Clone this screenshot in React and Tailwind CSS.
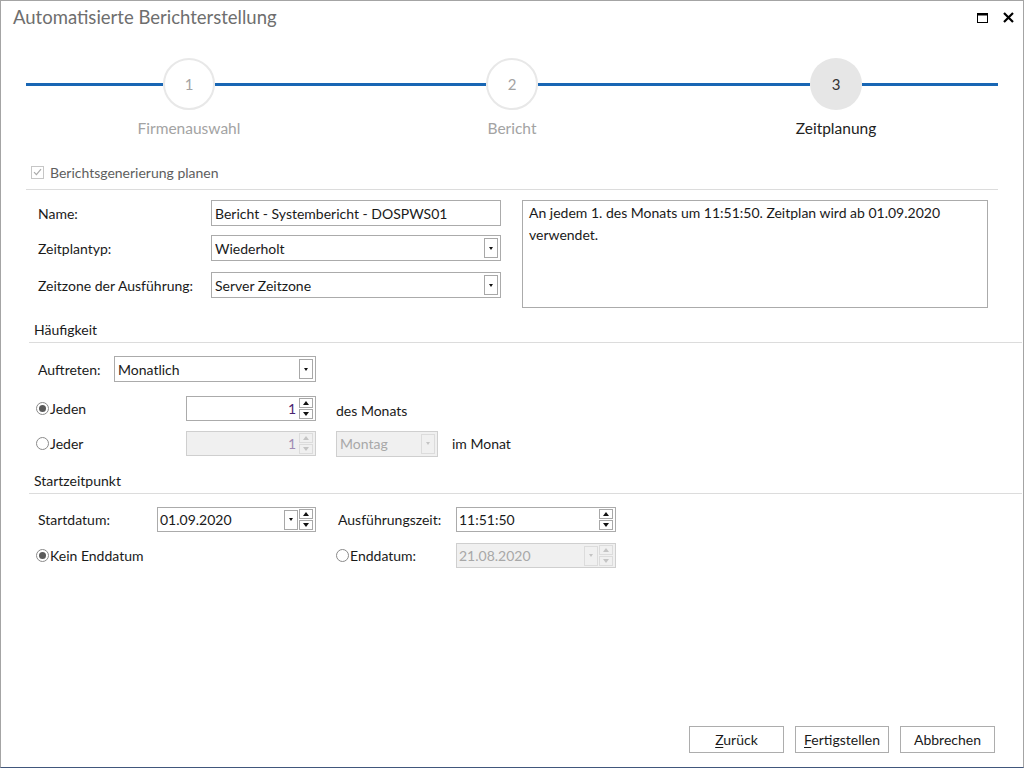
import React from 'react';

const font = "font-['Lato','Noto_Sans',sans-serif]";

function Up({ dim }) {
    return (
        <span
            className={
                'w-0 h-0 border-l-[3px] border-r-[3px] border-b-[4px] border-l-transparent border-r-transparent ' +
                (dim ? 'border-b-[#c4c4c4]' : 'border-b-[#111]')
            }
        />
    );
}

function Down({ dim }) {
    return (
        <span
            className={
                'w-0 h-0 border-l-[3px] border-r-[3px] border-t-[4px] border-l-transparent border-r-transparent ' +
                (dim ? 'border-t-[#c4c4c4]' : 'border-t-[#111]')
            }
        />
    );
}

function DropBtn({ dim }) {
    return (
        <div
            className={
                'w-[14px] h-[20px] border flex items-center justify-center shrink-0 ' +
                (dim ? 'border-[#dcdcdc] bg-[#f0f0f0]' : 'border-[#a8a8a8] bg-white')
            }
        >
            <span
                className={
                    'w-0 h-0 border-l-[2px] border-r-[2px] border-t-[3px] border-l-transparent border-r-transparent ' +
                    (dim ? 'border-t-[#c4c4c4]' : 'border-t-[#111]')
                }
            />
        </div>
    );
}

function Spin({ dim }) {
    const box = 'h-[10px] w-[14px] border flex items-center justify-center ' +
        (dim ? 'border-[#dcdcdc]' : 'border-[#a8a8a8] bg-white');
    return (
        <div className="flex flex-col gap-px shrink-0">
            <div className={box}><Up dim={dim} /></div>
            <div className={box}><Down dim={dim} /></div>
        </div>
    );
}

function Select({ w, value, dim }) {
    return (
        <div
            className={
                'h-[26px] border flex items-center pl-[3px] pr-[2px] ' + w + ' ' +
                (dim ? 'border-[#cfcfcf] bg-[#f0f0f0] text-[#a8a8a8]' : 'border-[#ababab] bg-white text-[#1a1a1a]')
            }
        >
            <span className="flex-1 truncate">{value}</span>
            <DropBtn dim={dim} />
        </div>
    );
}

function NumSpin({ dim }) {
    return (
        <div
            className={
                'w-[130px] h-[25px] border flex items-center justify-end gap-[3px] pr-[2px] ' +
                (dim ? 'border-[#cfcfcf] bg-[#f0f0f0] text-[#a08cb4]' : 'border-[#ababab] bg-white text-[#4a2470]')
            }
        >
            <span>1</span>
            <Spin dim={dim} />
        </div>
    );
}

function DateField({ w, value, dim, drop }) {
    return (
        <div
            className={
                'h-[25px] border flex items-center pl-[2px] pr-[2px] gap-px ' + w + ' ' +
                (dim ? 'border-[#cfcfcf] bg-[#f0f0f0] text-[#a8a8a8]' : 'border-[#ababab] bg-white text-[#1a1a1a]')
            }
        >
            <span className="flex-1">{value}</span>
            {drop && <DropBtn dim={dim} />}
            <Spin dim={dim} />
        </div>
    );
}

function Radio({ on, label }) {
    return (
        <div className="flex items-center">
            <span className="w-[13px] h-[13px] rounded-full border border-[#8a8a8a] bg-white flex items-center justify-center">
                {on && <span className="w-[7px] h-[7px] rounded-full bg-[#5a5a5a]" />}
            </span>
            <span className="ml-[1px]">{label}</span>
        </div>
    );
}

function Step({ n, active }) {
    return (
        <div
            className={
                'w-[52px] h-[52px] rounded-full flex items-center justify-center text-[15px] shrink-0 ' +
                (active ? 'bg-[#e6e6e6] text-[#333]' : 'border-2 border-[#e8e8e8] bg-white text-[#a3a3a3]')
            }
        >
            {n}
        </div>
    );
}

function Btn({ children, w }) {
    return (
        <button className={'h-[27px] border border-[#adadad] bg-white text-[#1a1a1a] ' + w}>
            {children}
        </button>
    );
}

export default function App() {
    return (
        <div className={'w-[1024px] h-[768px] bg-white border border-[#a4a4a4] border-b-[#41577c] flex flex-col text-[14px] text-[#1a1a1a] ' + font}>
            {/* Titel */}
            <div className="h-[33px] flex items-center justify-between pl-[12px] pr-[9px]">
                <span className="text-[18.5px] text-[#6e6e6e]">Automatisierte Berichterstellung</span>
                <div className="flex items-center gap-[15px]">
                    <svg width="11" height="10" viewBox="0 0 11 10">
                        <rect x="0.5" y="0.5" width="10" height="9" fill="none" stroke="#000" />
                        <rect x="0" y="0" width="11" height="2.5" fill="#000" />
                    </svg>
                    <svg width="11" height="11" viewBox="0 0 11 11">
                        <path d="M1 1 L10 10 M10 1 L1 10" stroke="#000" strokeWidth="2.2" />
                    </svg>
                </div>
            </div>

            {/* Schritte */}
            <div className="mt-[24px] flex items-center pl-[25px]">
                <div className="w-[137px] h-[3px] bg-[#1866b4]" />
                <Step n="1" />
                <div className="w-[271px] h-[3px] bg-[#1866b4]" />
                <Step n="2" />
                <div className="w-[272px] h-[3px] bg-[#1866b4]" />
                <Step n="3" active />
                <div className="w-[136px] h-[3px] bg-[#1866b4]" />
            </div>
            <div className="mt-[8px] h-[22px] flex items-center pl-[88px] text-[15.5px]">
                <div className="w-[200px] text-center text-[#a3a3a3]">Firmenauswahl</div>
                <div className="ml-[123px] w-[200px] text-center text-[#a3a3a3]">Bericht</div>
                <div className="ml-[124px] w-[200px] text-center text-[#222]">Zeitplanung</div>
            </div>

            {/* Checkbox */}
            <div className="mt-[21px] h-[22px] flex items-center pl-[30px] text-[#5e5e5e]">
                <span className="w-[13px] h-[13px] border border-[#c6c6c6] flex items-center justify-center">
                    <svg width="9" height="8" viewBox="0 0 9 8">
                        <path d="M1 4.2 L3.4 6.6 L8 1.2" fill="none" stroke="#aaa" strokeWidth="1.2" />
                    </svg>
                </span>
                <span className="ml-[6px]">Berichtsgenerierung planen</span>
            </div>
            <div className="mt-[6px] ml-[25px] w-[972px] h-px bg-[#dcdcdc]" />

            {/* Name / Typ / Zone */}
            <div className="mt-[10px] flex pl-[37px]">
                <div className="flex flex-col">
                    <div className="h-[26px] flex items-center">
                        <span className="w-[173px]">Name:</span>
                        <div className="w-[290px] h-[26px] border border-[#ababab] flex items-center pl-[3px]">
                            Bericht - Systembericht - DOSPWS01
                        </div>
                    </div>
                    <div className="mt-[9px] h-[26px] flex items-center">
                        <span className="w-[173px]">Zeitplantyp:</span>
                        <Select w="w-[290px]" value="Wiederholt" />
                    </div>
                    <div className="mt-[11px] h-[26px] flex items-center">
                        <span className="w-[173px]">Zeitzone der Ausführung:</span>
                        <Select w="w-[290px]" value="Server Zeitzone" />
                    </div>
                </div>
                <div className="ml-[21px] w-[466px] h-[108px] border border-[#ababab] px-[6px] pt-[1px] leading-[22px]">
                    An jedem 1. des Monats um 11:51:50. Zeitplan wird ab 01.09.2020 verwendet.
                </div>
            </div>

            {/* Häufigkeit */}
            <div className="mt-[10px] h-[22px] flex items-center pl-[33px]">Häufigkeit</div>
            <div className="mt-[2px] ml-[28px] mr-px h-px bg-[#dcdcdc]" />

            <div className="mt-[13px] h-[26px] flex items-center pl-[37px]">
                <span className="w-[76px]">Auftreten:</span>
                <Select w="w-[202px]" value="Monatlich" />
            </div>
            <div className="mt-[14px] h-[25px] flex items-center pl-[35px]">
                <div className="w-[150px]"><Radio on label="Jeden" /></div>
                <NumSpin />
                <span className="ml-[20px] mt-[4px]">des Monats</span>
            </div>
            <div className="mt-[10px] h-[25px] flex items-center pl-[35px]">
                <div className="w-[150px]"><Radio label="Jeder" /></div>
                <NumSpin dim />
                <div className="ml-[20px]"><Select w="w-[102px]" value="Montag" dim /></div>
                <span className="ml-[14px]">im Monat</span>
            </div>

            {/* Startzeitpunkt */}
            <div className="mt-[13px] h-[22px] flex items-center pl-[33px]">Startzeitpunkt</div>
            <div className="mt-[2px] ml-[28px] mr-px h-px bg-[#dcdcdc]" />

            <div className="mt-[13px] h-[25px] flex items-center pl-[37px]">
                <span className="w-[119px]">Startdatum:</span>
                <DateField w="w-[159px]" value="01.09.2020" drop />
                <span className="ml-[22px] w-[118px]">Ausführungszeit:</span>
                <DateField w="w-[160px]" value="11:51:50" />
            </div>
            <div className="mt-[11px] h-[25px] flex items-center pl-[35px]">
                <div className="w-[300px]"><Radio on label="Kein Enddatum" /></div>
                <div className="w-[120px]"><Radio label="Enddatum:" /></div>
                <DateField w="w-[160px]" value="21.08.2020" drop dim />
            </div>

            <div className="flex-1" />

            {/* Buttons */}
            <div className="mb-[14px] flex justify-end gap-[11px] pr-[28px]">
                <Btn w="w-[95px]"><span className="underline underline-offset-2">Z</span>urück</Btn>
                <Btn w="w-[94px]"><span className="underline underline-offset-2">F</span>ertigstellen</Btn>
                <Btn w="w-[95px]">Abbrechen</Btn>
            </div>
        </div>
    );
}
